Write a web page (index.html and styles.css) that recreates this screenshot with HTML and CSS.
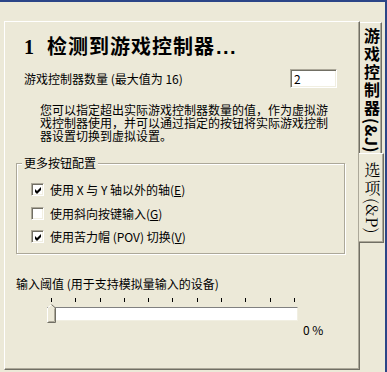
FILE: index.html
```html
<!DOCTYPE html>
<html lang="zh-CN">
<head>
<meta charset="utf-8">
<title>游戏控制器选项</title>
<link rel="stylesheet" href="styles.css">
</head>
<body>
<div class="window">
  <div class="panel">
    <h1 class="title"><span class="num">1</span>检测到游戏控制器<span class="dots">...</span></h1>
    <div class="count-row">
      <span>游戏控制器数量 (最大值为 16)</span>
      <div class="input">2</div>
    </div>
    <p class="desc">您可以指定超出实际游戏控制器数量的值，作为虚拟游<br>戏控制器使用，并可以通过指定的按钮将实际游戏控制<br>器设置切换到虚拟设置。</p>
    <div class="group">
      <span class="legend">更多按钮配置</span>
      <div class="check"><span class="box"><svg width="7" height="7" viewBox="0 0 7 7"><path d="M0 2 L2 4 L6 0 L6 3 L2 7 L0 5 Z" fill="#000"/></svg></span><span>使用 X 与 Y 轴以外的轴(<u>E</u>)</span></div>
      <div class="check"><span class="box"></span><span>使用斜向按键输入(<u>G</u>)</span></div>
      <div class="check"><span class="box"><svg width="7" height="7" viewBox="0 0 7 7"><path d="M0 2 L2 4 L6 0 L6 3 L2 7 L0 5 Z" fill="#000"/></svg></span><span>使用苦力帽 (POV) 切换(<u>V</u>)</span></div>
    </div>
    <div class="thr-label">输入阈值 (用于支持模拟量输入的设备)</div>
    <div class="slider">
      <div class="ticks"><i></i><i></i><i></i><i></i><i></i><i></i><i></i><i></i><i></i><i></i><i></i></div>
      <div class="track">
        <svg class="thumb" width="9" height="19" viewBox="0 0 9 19">
          <path d="M0.5 18.5 V4 L4.5 0.5 L8.5 4 V18.5 Z" fill="#ECE9D8"/>
          <path d="M0.5 18 V4 L4.5 0.5" stroke="#fff" fill="none"/>
          <path d="M4.5 0.5 L8.5 4 V18.5 H0.5" stroke="#716F64" fill="none"/>
          <path d="M7.5 4.5 V17.5 H1.5" stroke="#ACA899" fill="none"/>
        </svg>
      </div>
    </div>
    <div class="pct">0 %</div>
  </div>
  <div class="tabs">
    <div class="tab">游戏控制器<span class="acc">(&amp;J)</span></div>
    <div class="tab selected">选项<span class="acc">(&amp;P)</span></div>
  </div>
</div>
</body>
</html>
```
FILE: styles.css
```css
* { box-sizing: border-box; }
html, body { margin: 0; padding: 0; }
body {
  width: 387px;
  height: 372px;
  overflow: hidden;
  background: #ECE9D8;
  color: #000;
  font-family: "Noto Sans CJK SC", sans-serif;
  font-size: 12px;
}
.window {
  display: flex;
  height: 372px;
  border-top: 2px solid #2B4587;
  border-right: 2px solid #2B4587;
  padding: 19px 0 0 4px;
}
.panel {
  flex: none;
  width: 356px;
  height: 349px;
  border: 1px solid;
  border-color: #fff #716F64 #716F64 #fff;
  box-shadow: inset -1px -1px 0 #ACA899;
}
.title {
  margin: 14px 0 0 19px;
  font-size: 20px;
  line-height: 20px;
  font-weight: bold;
  letter-spacing: 1px;
  white-space: nowrap;
}
.num {
  font-family: "Liberation Serif", serif;
  margin-right: 12px;
}
.dots {
  font-family: "Liberation Sans", sans-serif;
  letter-spacing: 1.5px;
  margin-left: 1px;
}
.count-row {
  display: flex;
  align-items: center;
  height: 19px;
  margin: 12px 0 0 19px;
  line-height: 13px;
}
.input {
  margin-left: auto;
  margin-right: 22px;
  width: 47px;
  height: 19px;
  background: #fff;
  border: 1px solid;
  border-color: #ACA899 #fff #fff #ACA899;
  box-shadow: inset 1px 1px 0 #716F64, inset -1px -1px 0 #F1EFE2;
  padding-left: 3px;
  line-height: 17px;
}
.desc {
  margin: 15px 0 0 35px;
  line-height: 13px;
  white-space: nowrap;
}
.group {
  position: relative;
  margin: 21px 0 0 11px;
  width: 329px;
  height: 91px;
  border: 1px solid #ACA899;
  box-shadow: inset 1px 1px 0 #fff, 1px 1px 0 #fff;
  padding: 14px 0 0 14px;
}
.legend {
  position: absolute;
  left: 5px;
  top: -8px;
  padding: 0 2px;
  background: #ECE9D8;
  line-height: 13px;
}
.check {
  display: flex;
  align-items: center;
  gap: 6px;
  height: 23.5px;
  white-space: nowrap;
}
.box {
  flex: none;
  display: flex;
  align-items: center;
  justify-content: center;
  width: 13px;
  height: 13px;
  background: #fff;
  border: 1px solid;
  border-color: #ACA899 #fff #fff #ACA899;
  box-shadow: inset 1px 1px 0 #716F64, inset -1px -1px 0 #F1EFE2;
}
.box svg { display: block; margin: 1px 0 0 1px; }
u { text-decoration: underline; }
.thr-label {
  margin: 23px 0 0 11px;
  line-height: 14px;
  white-space: nowrap;
}
.slider {
  margin: 7px 0 0 42px;
  width: 251px;
}
.ticks {
  display: flex;
  justify-content: space-between;
  height: 4px;
  padding: 0 3px 0 4px;
}
.ticks i {
  display: block;
  width: 1px;
  height: 4px;
  background: #000;
}
.track {
  position: relative;
  margin-top: 5px;
  height: 14px;
  background: #fff;
  border-top: 1px solid #808080;
  border-left: 1px solid #808080;
  border-bottom: 1px solid #F1EFE2;
  border-right: 1px solid #F1EFE2;
}
.thumb {
  position: absolute;
  left: -1px;
  top: -4px;
  display: block;
}
.pct {
  margin: 2px 0 0 298px;
  line-height: 13px;
  white-space: nowrap;
}
.tabs {
  flex: none;
  width: 25px;
  padding-top: 1px;
  display: flex;
  flex-direction: column;
  align-items: flex-start;
}
.tab {
  writing-mode: vertical-rl;
  width: 22px;
  height: 131px;
  padding: 5px 0 0 2px;
  line-height: 19px;
  border-top: 1px solid #fff;
  border-right: 1px solid #716F64;
  box-shadow: inset -1px 0 0 #ACA899;
  font-size: 16px;
  font-weight: bold;
  letter-spacing: 2px;
  white-space: nowrap;
}
.acc {
  letter-spacing: 0.5px;
}
.tab.selected {
  margin-left: -1px;
  width: 25px;
  height: 90px;
  padding-top: 8px;
  line-height: 22px;
  background: #ECE9D8;
  border-bottom: 1px solid #716F64;
  box-shadow: inset -1px -1px 0 #ACA899;
  font-weight: normal;
  font-family: "Noto Serif CJK SC", "Noto Sans CJK SC", "Liberation Serif", serif;
}
```
